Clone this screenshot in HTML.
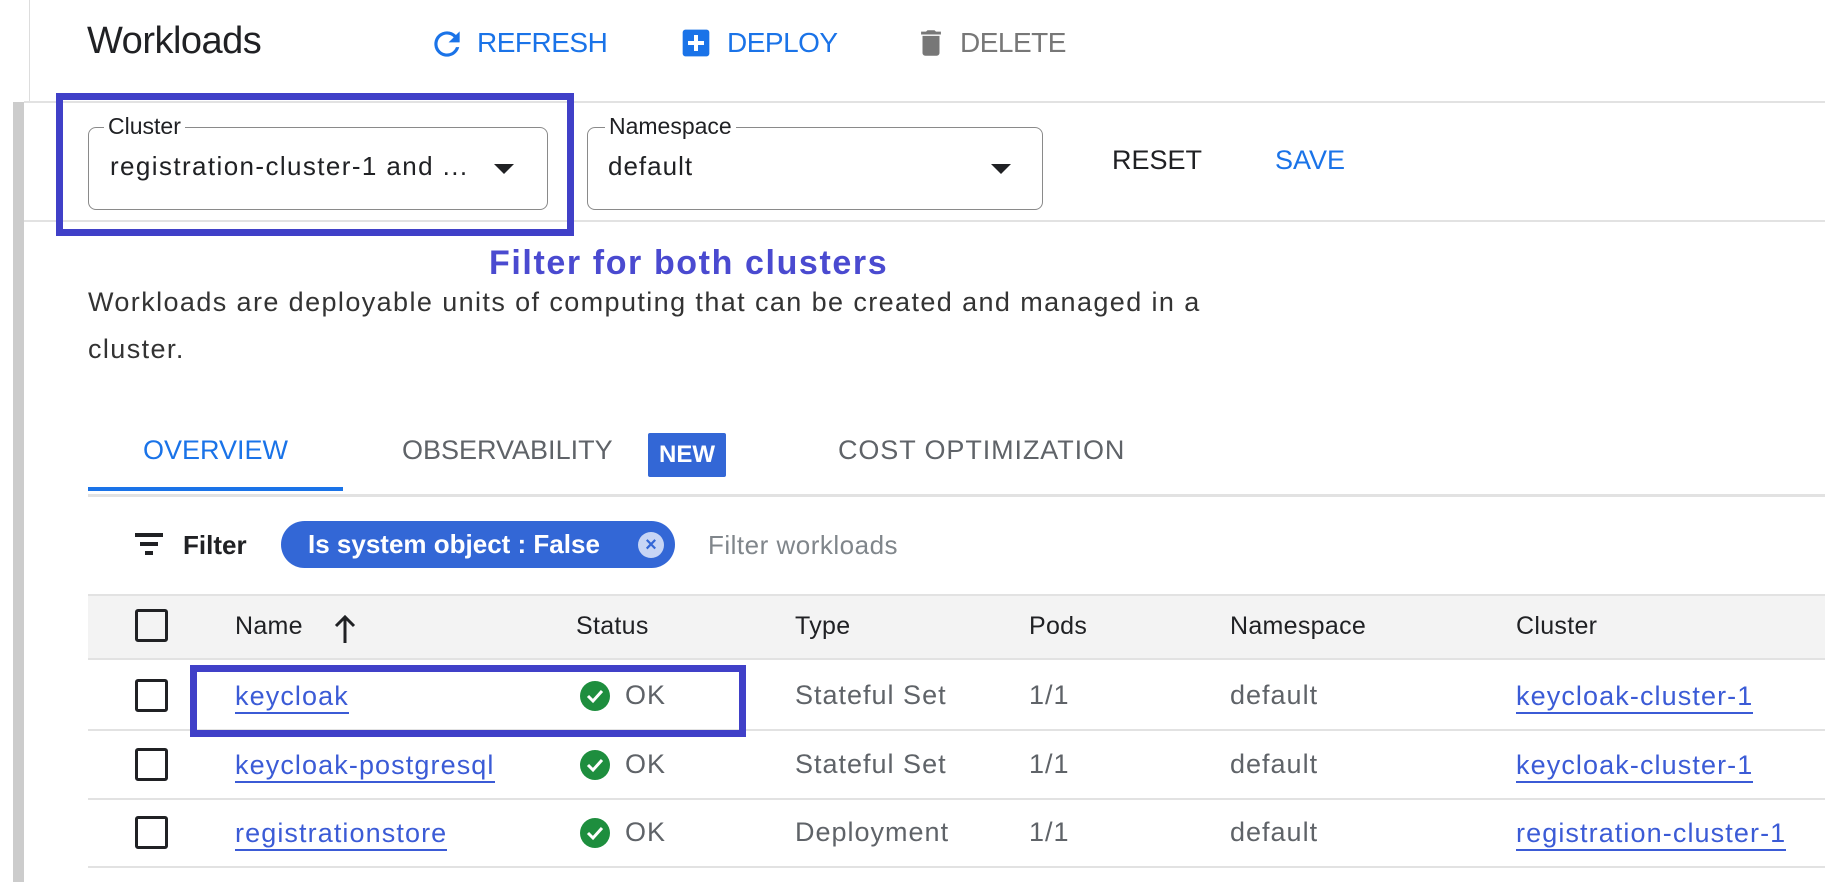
<!DOCTYPE html>
<html><head><meta charset="utf-8"><style>
*{margin:0;padding:0;box-sizing:border-box}
body{width:1825px;height:882px;background:#fff;font-family:"Liberation Sans",Arial,sans-serif;position:relative;overflow:hidden;color:#202124}
.a{position:absolute;white-space:nowrap}
.btn{font-size:28px;letter-spacing:-0.5px}
.hl{position:absolute;height:2px;background:#e2e2e2}
.field{position:absolute;border:1.5px solid #8a8a8a;border-radius:8px}
.lab{position:absolute;top:-15px;background:#fff;padding:0 4px;font-size:23px;color:#202124}
.val{position:absolute;font-size:26px;color:#202124}
.arr{position:absolute;width:0;height:0;border-left:10px solid transparent;border-right:10px solid transparent;border-top:10px solid #202124}
.box{position:absolute;border:7px solid #4040c8}
.th{position:absolute;font-size:25px;color:#202124;top:612px;letter-spacing:0.3px}
.td{position:absolute;font-size:27px;color:#5f6368;letter-spacing:1px}
.lk{position:absolute;font-size:27px;color:#3b5bd6;border-bottom:2px solid #3b5bd6;line-height:32px;letter-spacing:1.1px}
.cb{position:absolute;left:135px;width:33px;height:33px;border:3px solid #202124;border-radius:3px}
.ok{position:absolute;left:580px;width:30px;height:30px;border-radius:50%;background:#1e8e3e}
.rl{position:absolute;left:88px;right:0;height:2px;background:#e2e2e2}
</style></head><body>
<div style="position:absolute;left:29px;top:0;width:1px;height:102px;background:#ddd"></div>
<div style="position:absolute;left:13px;top:102px;width:11px;height:780px;background:#ccc"></div>
<div class="a" style="left:87px;top:20px;font-size:38px;letter-spacing:-0.5px">Workloads</div>
<svg class="a" style="left:428px;top:25px" width="38" height="38" viewBox="0 0 24 24"><path d="M17.65 6.35A7.96 7.96 0 0 0 12 4a8 8 0 1 0 7.73 10h-2.08A6 6 0 1 1 12 6c1.66 0 3.14.69 4.22 1.78L13 11h7V4l-2.35 2.35z" fill="#1a73e8"/></svg>
<div class="a btn" style="left:477px;top:27px;color:#1a73e8">REFRESH</div>
<svg class="a" style="left:680px;top:27px" width="32" height="32" viewBox="0 0 24 24"><rect x="2" y="2" width="20" height="20" rx="2" fill="#1a73e8"/><path d="M12 6v12M6 12h12" stroke="#fff" stroke-width="3"/></svg>
<div class="a btn" style="left:727px;top:27px;color:#1a73e8">DEPLOY</div>
<svg class="a" style="left:914px;top:24px" width="34" height="38" viewBox="0 0 24 24"><path d="M6 19c0 1.1.9 2 2 2h8c1.1 0 2-.9 2-2V7H6v12zM19 4h-3.5l-1-1h-5l-1 1H5v2h14V4z" fill="#777"/></svg>
<div class="a btn" style="left:960px;top:27px;color:#777">DELETE</div>
<div class="hl" style="left:24px;right:0;top:101px"></div>
<div class="hl" style="left:24px;right:0;top:220px"></div>
<div class="field" style="left:88px;top:127px;width:460px;height:83px"><div class="lab" style="left:15px">Cluster</div><div class="val" style="left:21px;top:23px;letter-spacing:1.4px">registration-cluster-1 and ...</div><div class="arr" style="left:405px;top:36px"></div></div>
<div class="field" style="left:587px;top:127px;width:456px;height:83px"><div class="lab" style="left:17px">Namespace</div><div class="val" style="left:20px;top:23px;letter-spacing:1px">default</div><div class="arr" style="left:403px;top:36px"></div></div>
<div class="box" style="left:56px;top:93px;width:518px;height:143px"></div>
<div class="a" style="left:1112px;top:145px;font-size:27px">RESET</div>
<div class="a" style="left:1275px;top:145px;font-size:27px;color:#1a73e8">SAVE</div>
<div class="a" style="left:489px;top:244px;font-size:34px;font-weight:bold;color:#4a4ad0;letter-spacing:1.6px">Filter for both clusters</div>
<div class="a" style="left:88px;top:287px;font-size:27px;color:#333;letter-spacing:1.4px">Workloads are deployable units of computing that can be created and managed in a</div>
<div class="a" style="left:88px;top:334px;font-size:27px;color:#333;letter-spacing:1.4px">cluster.</div>
<div class="a" style="left:143px;top:435px;font-size:27px;color:#1a73e8">OVERVIEW</div>
<div class="a" style="left:402px;top:435px;font-size:27px;color:#5f6368">OBSERVABILITY</div>
<div class="a" style="left:648px;top:433px;width:78px;height:44px;background:#3367d6;color:#fff;font-size:24px;font-weight:bold;text-align:center;line-height:44px;border-radius:2px">NEW</div>
<div class="a" style="left:838px;top:435px;font-size:27px;color:#5f6368;letter-spacing:0.9px">COST OPTIMIZATION</div>
<div class="hl" style="left:88px;right:0;top:494px;height:3px"></div>
<div class="a" style="left:88px;top:487px;width:255px;height:4px;background:#1a73e8"></div>
<svg class="a" style="left:134px;top:532px" width="30" height="26" viewBox="0 0 30 26"><path d="M1 3h28M6 12h18M11 21h8" stroke="#202124" stroke-width="4"/></svg>
<div class="a" style="left:183px;top:530px;font-size:26px;font-weight:bold">Filter</div>
<div class="a" style="left:281px;top:521px;width:394px;height:47px;border-radius:24px;background:#3367d6"></div>
<div class="a" style="left:308px;top:529px;font-size:26px;color:#fff;font-weight:bold">Is system object : False</div>
<div class="a" style="left:638px;top:532px;width:26px;height:26px;border-radius:50%;background:#c7d5f5;color:#3367d6;font-size:20px;font-weight:bold;text-align:center;line-height:26px">×</div>
<div class="a" style="left:708px;top:530px;font-size:26px;color:#80868b;letter-spacing:0.5px">Filter workloads</div>
<div class="a" style="left:88px;right:0;top:594px;height:66px;background:#f3f3f3;border-top:2px solid #e2e2e2;border-bottom:2px solid #e2e2e2"></div>
<div class="cb" style="top:609px"></div>
<div class="th" style="left:235px">Name</div>
<svg class="a" style="left:334px;top:614px" width="22" height="30" viewBox="0 0 22 30"><path d="M11 29V3M2 12l9-9 9 9" stroke="#202124" stroke-width="3" fill="none"/></svg>
<div class="th" style="left:576px">Status</div>
<div class="th" style="left:795px">Type</div>
<div class="th" style="left:1029px">Pods</div>
<div class="th" style="left:1230px">Namespace</div>
<div class="th" style="left:1516px">Cluster</div>

<div class="cb" style="top:679px"></div>
<div class="lk" style="left:235px;top:680px">keycloak</div>
<div class="ok" style="top:681px"></div><svg class="a" style="left:586px;top:688px" width="18" height="16" viewBox="0 0 18 16"><path d="M2 8l5 5 9-10" stroke="#fff" stroke-width="3" fill="none"/></svg>
<div class="td" style="left:625px;top:680px">OK</div>
<div class="td" style="left:795px;top:680px">Stateful Set</div>
<div class="td" style="left:1029px;top:680px">1/1</div>
<div class="td" style="left:1230px;top:680px">default</div>
<div class="lk" style="left:1516px;top:680px">keycloak-cluster-1</div>
<div class="rl" style="top:729px"></div>

<div class="cb" style="top:748px"></div>
<div class="lk" style="left:235px;top:749px">keycloak-postgresql</div>
<div class="ok" style="top:750px"></div><svg class="a" style="left:586px;top:757px" width="18" height="16" viewBox="0 0 18 16"><path d="M2 8l5 5 9-10" stroke="#fff" stroke-width="3" fill="none"/></svg>
<div class="td" style="left:625px;top:749px">OK</div>
<div class="td" style="left:795px;top:749px">Stateful Set</div>
<div class="td" style="left:1029px;top:749px">1/1</div>
<div class="td" style="left:1230px;top:749px">default</div>
<div class="lk" style="left:1516px;top:749px">keycloak-cluster-1</div>
<div class="rl" style="top:798px"></div>

<div class="cb" style="top:816px"></div>
<div class="lk" style="left:235px;top:817px">registrationstore</div>
<div class="ok" style="top:818px"></div><svg class="a" style="left:586px;top:825px" width="18" height="16" viewBox="0 0 18 16"><path d="M2 8l5 5 9-10" stroke="#fff" stroke-width="3" fill="none"/></svg>
<div class="td" style="left:625px;top:817px">OK</div>
<div class="td" style="left:795px;top:817px">Deployment</div>
<div class="td" style="left:1029px;top:817px">1/1</div>
<div class="td" style="left:1230px;top:817px">default</div>
<div class="lk" style="left:1516px;top:817px">registration-cluster-1</div>
<div class="rl" style="top:866px"></div>

<div class="box" style="left:190px;top:665px;width:556px;height:72px"></div>
</body></html>
